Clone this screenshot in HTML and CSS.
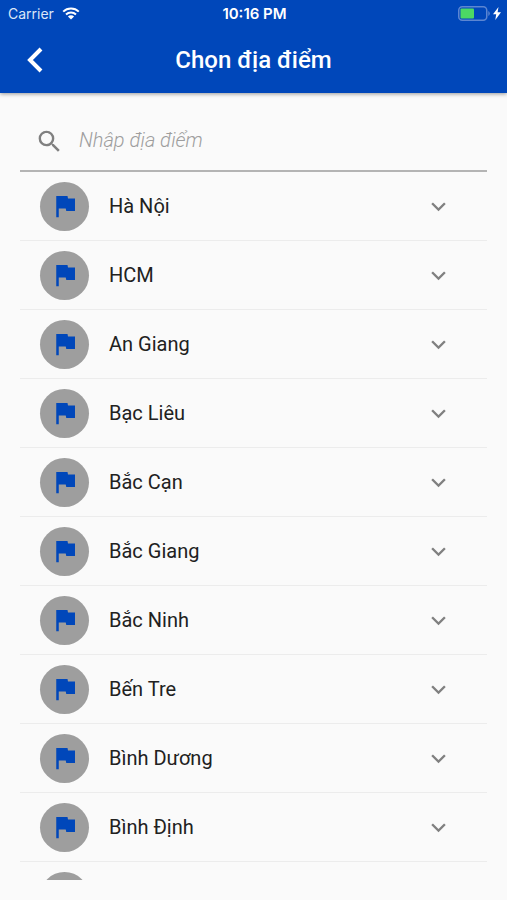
FILE: index.html
```html
<!DOCTYPE html>
<html lang="vi">
<head>
  <meta charset="UTF-8" />
  <meta name="viewport" content="width=device-width, initial-scale=1.0"/>
  <title>Chọn địa điểm</title>
  <link rel="stylesheet" href="styles.css">
</head>
<body>

  <header>
    <div class="status-bar">
      <div class="carrier">
        <span>Carrier</span>
        <svg class="wifi" viewBox="0 0 18 13" aria-hidden="true">
          <path d="M1.2 4.6a11.2 11.2 0 0 1 15.6 0M4 7.5a7.2 7.2 0 0 1 10 0" fill="none" stroke="#fff" stroke-width="2"/>
          <path d="M9 12.6L5.9 9.5a4.4 4.4 0 0 1 6.2 0z" fill="#fff"/>
        </svg>
      </div>
      <span class="time">10:16 PM</span>
      <div class="battery">
        <svg class="battery-icon" viewBox="0 0 32 15" aria-hidden="true">
          <rect x="0.75" y="0.75" width="28" height="13.5" rx="3.5" fill="none" stroke="#5c86d2" stroke-width="1.5"/>
          <rect x="2.5" y="2.5" width="13.5" height="10" rx="1" fill="#4cd964"/>
          <path d="M30.3 5v5q1.5-.8 1.5-2.5t-1.5-2.5z" fill="#5c86d2"/>
        </svg>
        <svg class="bolt" viewBox="0 0 8 13" aria-hidden="true">
          <path d="M5.5 0L0 7.2h3.2L2.3 13 8 5.3H4.6z" fill="#fff"/>
        </svg>
      </div>
    </div>
    <div class="nav-bar">
      <button class="back-btn" aria-label="Quay lại">
        <svg viewBox="0 0 16 26" aria-hidden="true">
          <path d="M14 2L3 13l11 11" fill="none" stroke="#fff" stroke-width="4"/>
        </svg>
      </button>
      <h1>Chọn địa điểm</h1>
    </div>
  </header>

  <main>
    <form class="search-bar" id="searchForm">
      <label for="searchInput" aria-label="Tìm kiếm">
        <svg class="icon" viewBox="0 0 24 24" aria-hidden="true">
          <path d="M15.5 14h-.79l-.28-.27A6.471 6.471 0 0 0 16 9.5 6.5 6.5 0 1 0 9.5 16c1.61 0 3.09-.59 4.23-1.57l.27.28v.79l5 4.99L20.49 19l-4.99-5zm-6 0C7.01 14 5 11.99 5 9.5S7.01 5 9.5 5 14 7.01 14 9.5 11.99 14 9.5 14z"/>
        </svg>
      </label>
      <input type="text" id="searchInput" placeholder="Nhập địa điểm" />
    </form>

    <ul class="list" id="list"></ul>
  </main>

  <script>
    const places = ["Hà Nội", "HCM", "An Giang", "Bạc Liêu", "Bắc Cạn", "Bắc Giang",
      "Bắc Ninh", "Bến Tre", "Bình Dương", "Bình Định", "Bình Phước"];

    function renderList(items) {
      document.getElementById("list").innerHTML = items.map(name => `
        <li>
          <button class="row">
            <span class="avatar">
              <svg viewBox="0 0 24 24" aria-hidden="true"><path d="M14.4 6L14 4H5v17h2v-7h5.6l.4 2h7V6z"/></svg>
            </span>
            <span class="name">${name}</span>
            <svg class="icon" viewBox="0 0 24 24" aria-hidden="true"><path d="M16.59 8.59L12 13.17 7.41 8.59 6 10l6 6 6-6z"/></svg>
          </button>
        </li>`).join("");
    }

    document.getElementById("searchInput").oninput = function () {
      const query = this.value.toLowerCase();
      renderList(places.filter(name => name.toLowerCase().includes(query)));
    };

    document.getElementById("searchForm").onsubmit = function (e) {
      e.preventDefault();
    };

    renderList(places);
  </script>

</body>
</html>
```

FILE: styles.css
```css
* { box-sizing: border-box; margin: 0; padding: 0; }

body {
  height: 100vh;
  display: flex;
  flex-direction: column;
  background-color: #fafafa;
  font-family: Roboto, sans-serif;
  color: #212121;
}

button {
  background: none;
  border: none;
  font: inherit;
  color: inherit;
  cursor: pointer;
}

svg {
  display: block;
}

header {
  background-color: #0047ba;
  color: #fff;
  box-shadow: 0 1px 4px rgba(0, 0, 0, 0.4);
}

.status-bar {
  display: grid;
  grid-template-columns: 1fr auto 1fr;
  align-items: center;
  height: 27px;
  padding: 0 6px 0 8px;
  font-family: Inter, sans-serif;
  font-size: 14px;
}

.carrier, .battery {
  display: flex;
  align-items: center;
  gap: 8px;
}

.carrier {
  color: #dbe6f7;
}

.wifi {
  width: 18px;
  height: 13px;
}

.time {
  font-size: 15px;
  font-weight: 600;
}

.battery {
  justify-content: flex-end;
  gap: 3px;
}

.battery-icon {
  width: 32px;
  height: 15px;
}

.bolt {
  width: 8px;
  height: 13px;
}

.nav-bar {
  display: grid;
  grid-template-columns: 1fr auto 1fr;
  align-items: center;
  height: 66px;
  padding: 0 20px;
}

.back-btn {
  justify-self: start;
  padding: 7px;
}

.back-btn svg {
  width: 16px;
  height: 26px;
}

h1 {
  font-size: 24px;
  font-weight: 500;
}

main {
  flex: 1;
  min-height: 0;
  display: flex;
  flex-direction: column;
  padding: 20px;
}

.search-bar {
  display: flex;
  align-items: center;
  flex-shrink: 0;
  gap: 15px;
  height: 59px;
  padding: 0 15px;
  border-bottom: 2px solid #b4b4b4;
}

.search-bar input {
  flex: 1;
  min-width: 0;
  height: 40px;
  border: none;
  outline: none;
  background: none;
  padding-bottom: 4px;
  font: italic 300 20px Roboto, sans-serif;
}

.search-bar input::placeholder {
  color: #9e9e9e;
}

.icon {
  width: 29px;
  height: 29px;
  fill: #808080;
}

.list {
  flex: 1;
  min-height: 0;
  overflow-y: auto;
  scrollbar-width: none;
  list-style: none;
}

.row {
  display: flex;
  align-items: center;
  gap: 20px;
  width: 100%;
  height: 69px;
  padding: 0 34px 0 20px;
  border-bottom: 1px solid #ececec;
  font-size: 20px;
  text-align: left;
}

.avatar {
  display: flex;
  align-items: center;
  justify-content: center;
  width: 49px;
  height: 49px;
  border-radius: 50%;
  background-color: #9e9e9e;
}

.avatar svg {
  width: 30px;
  height: 30px;
  fill: #0047ba;
}

.name {
  flex: 1;
}
```
